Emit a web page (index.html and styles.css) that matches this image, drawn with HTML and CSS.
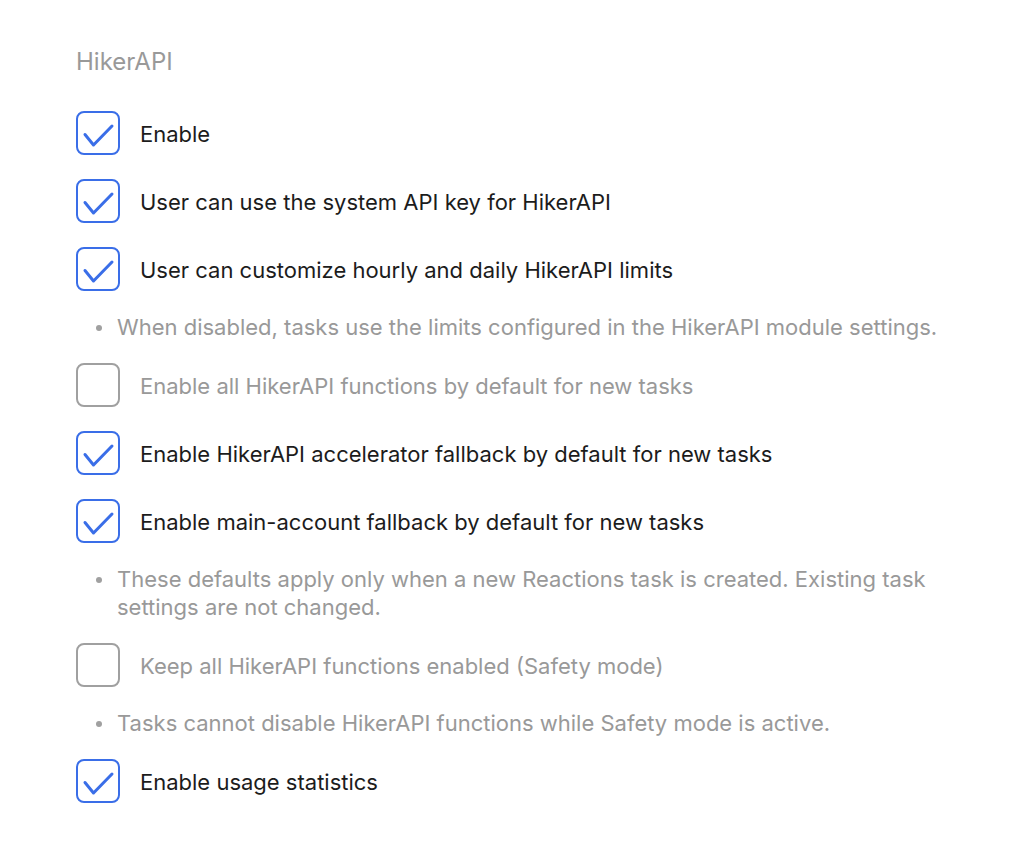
FILE: index.html
```html
<!DOCTYPE html>
<html lang="en">

<head>
    <meta charset="UTF-8">
    <meta name="viewport" content="width=device-width, initial-scale=1.0">
    <title>HikerAPI settings</title>
    <link rel="stylesheet" href="styles.css">
</head>

<body>
    <main class="settings">
        <h2 class="section-title">HikerAPI</h2>

        <div class="options">
            <label class="option checked">
                <span class="box"><svg viewBox="0 0 40 40"><path d="M7 21.5 L15.5 32 L34 13" /></svg></span>
                <span class="text">Enable</span>
            </label>

            <label class="option checked">
                <span class="box"><svg viewBox="0 0 40 40"><path d="M7 21.5 L15.5 32 L34 13" /></svg></span>
                <span class="text">User can use the system API key for HikerAPI</span>
            </label>

            <label class="option checked">
                <span class="box"><svg viewBox="0 0 40 40"><path d="M7 21.5 L15.5 32 L34 13" /></svg></span>
                <span class="text">User can customize hourly and daily HikerAPI limits</span>
            </label>

            <ul class="note">
                <li>When disabled, tasks use the limits configured in the HikerAPI module settings.</li>
            </ul>

            <label class="option">
                <span class="box"></span>
                <span class="text">Enable all HikerAPI functions by default for new tasks</span>
            </label>

            <label class="option checked">
                <span class="box"><svg viewBox="0 0 40 40"><path d="M7 21.5 L15.5 32 L34 13" /></svg></span>
                <span class="text">Enable HikerAPI accelerator fallback by default for new tasks</span>
            </label>

            <label class="option checked">
                <span class="box"><svg viewBox="0 0 40 40"><path d="M7 21.5 L15.5 32 L34 13" /></svg></span>
                <span class="text">Enable main-account fallback by default for new tasks</span>
            </label>

            <ul class="note">
                <li>These defaults apply only when a new Reactions task is created. Existing task settings are not changed.</li>
            </ul>

            <label class="option">
                <span class="box"></span>
                <span class="text">Keep all HikerAPI functions enabled (Safety mode)</span>
            </label>

            <ul class="note">
                <li>Tasks cannot disable HikerAPI functions while Safety mode is active.</li>
            </ul>

            <label class="option checked">
                <span class="box"><svg viewBox="0 0 40 40"><path d="M7 21.5 L15.5 32 L34 13" /></svg></span>
                <span class="text">Enable usage statistics</span>
            </label>
        </div>
    </main>
</body>

</html>
```

FILE: styles.css
```css
html,
body {
    margin: 0px;
    padding: 0px;
}

body {
    background-color: #FFFFFF;
    color: #1C1C1C;
    font-family: Inter, "Noto Sans", sans-serif;
    font-size: 22px;
}

.settings {
    padding: 48px 76px 40px 76px;
    max-width: 880px;
}

.section-title {
    margin: 0px 0px 35px 0px;
    font-size: 24px;
    font-weight: normal;
    line-height: 28px;
    color: #999999;
}

.options {
    display: flex;
    flex-direction: column;
    gap: 24px;
}

.option {
    display: flex;
    align-items: center;
    gap: 20px;
    cursor: pointer;
}

.box {
    flex: none;
    box-sizing: border-box;
    width: 44px;
    height: 44px;
    border: 2px solid #A0A0A0;
    border-radius: 8px;
    display: flex;
}

.box svg {
    width: 40px;
    height: 40px;
    fill: none;
    stroke: #3A6EE8;
    stroke-width: 3;
    stroke-linecap: round;
    stroke-linejoin: round;
}

.text {
    line-height: 28px;
    color: #999999;
    padding-top: 2px;
}

.checked .box {
    border-color: #3A6EE8;
}

.checked .text {
    color: #1C1C1C;
}

.note {
    margin: -2px 0px;
    padding: 0px 0px 0px 41px;
    list-style: none;
    color: #999999;
    line-height: 28px;
}

.note li {
    position: relative;
}

.note li::before {
    content: "";
    position: absolute;
    left: -21px;
    top: 12px;
    width: 6px;
    height: 6px;
    border-radius: 50%;
    background-color: #A0A0A0;
}
```
